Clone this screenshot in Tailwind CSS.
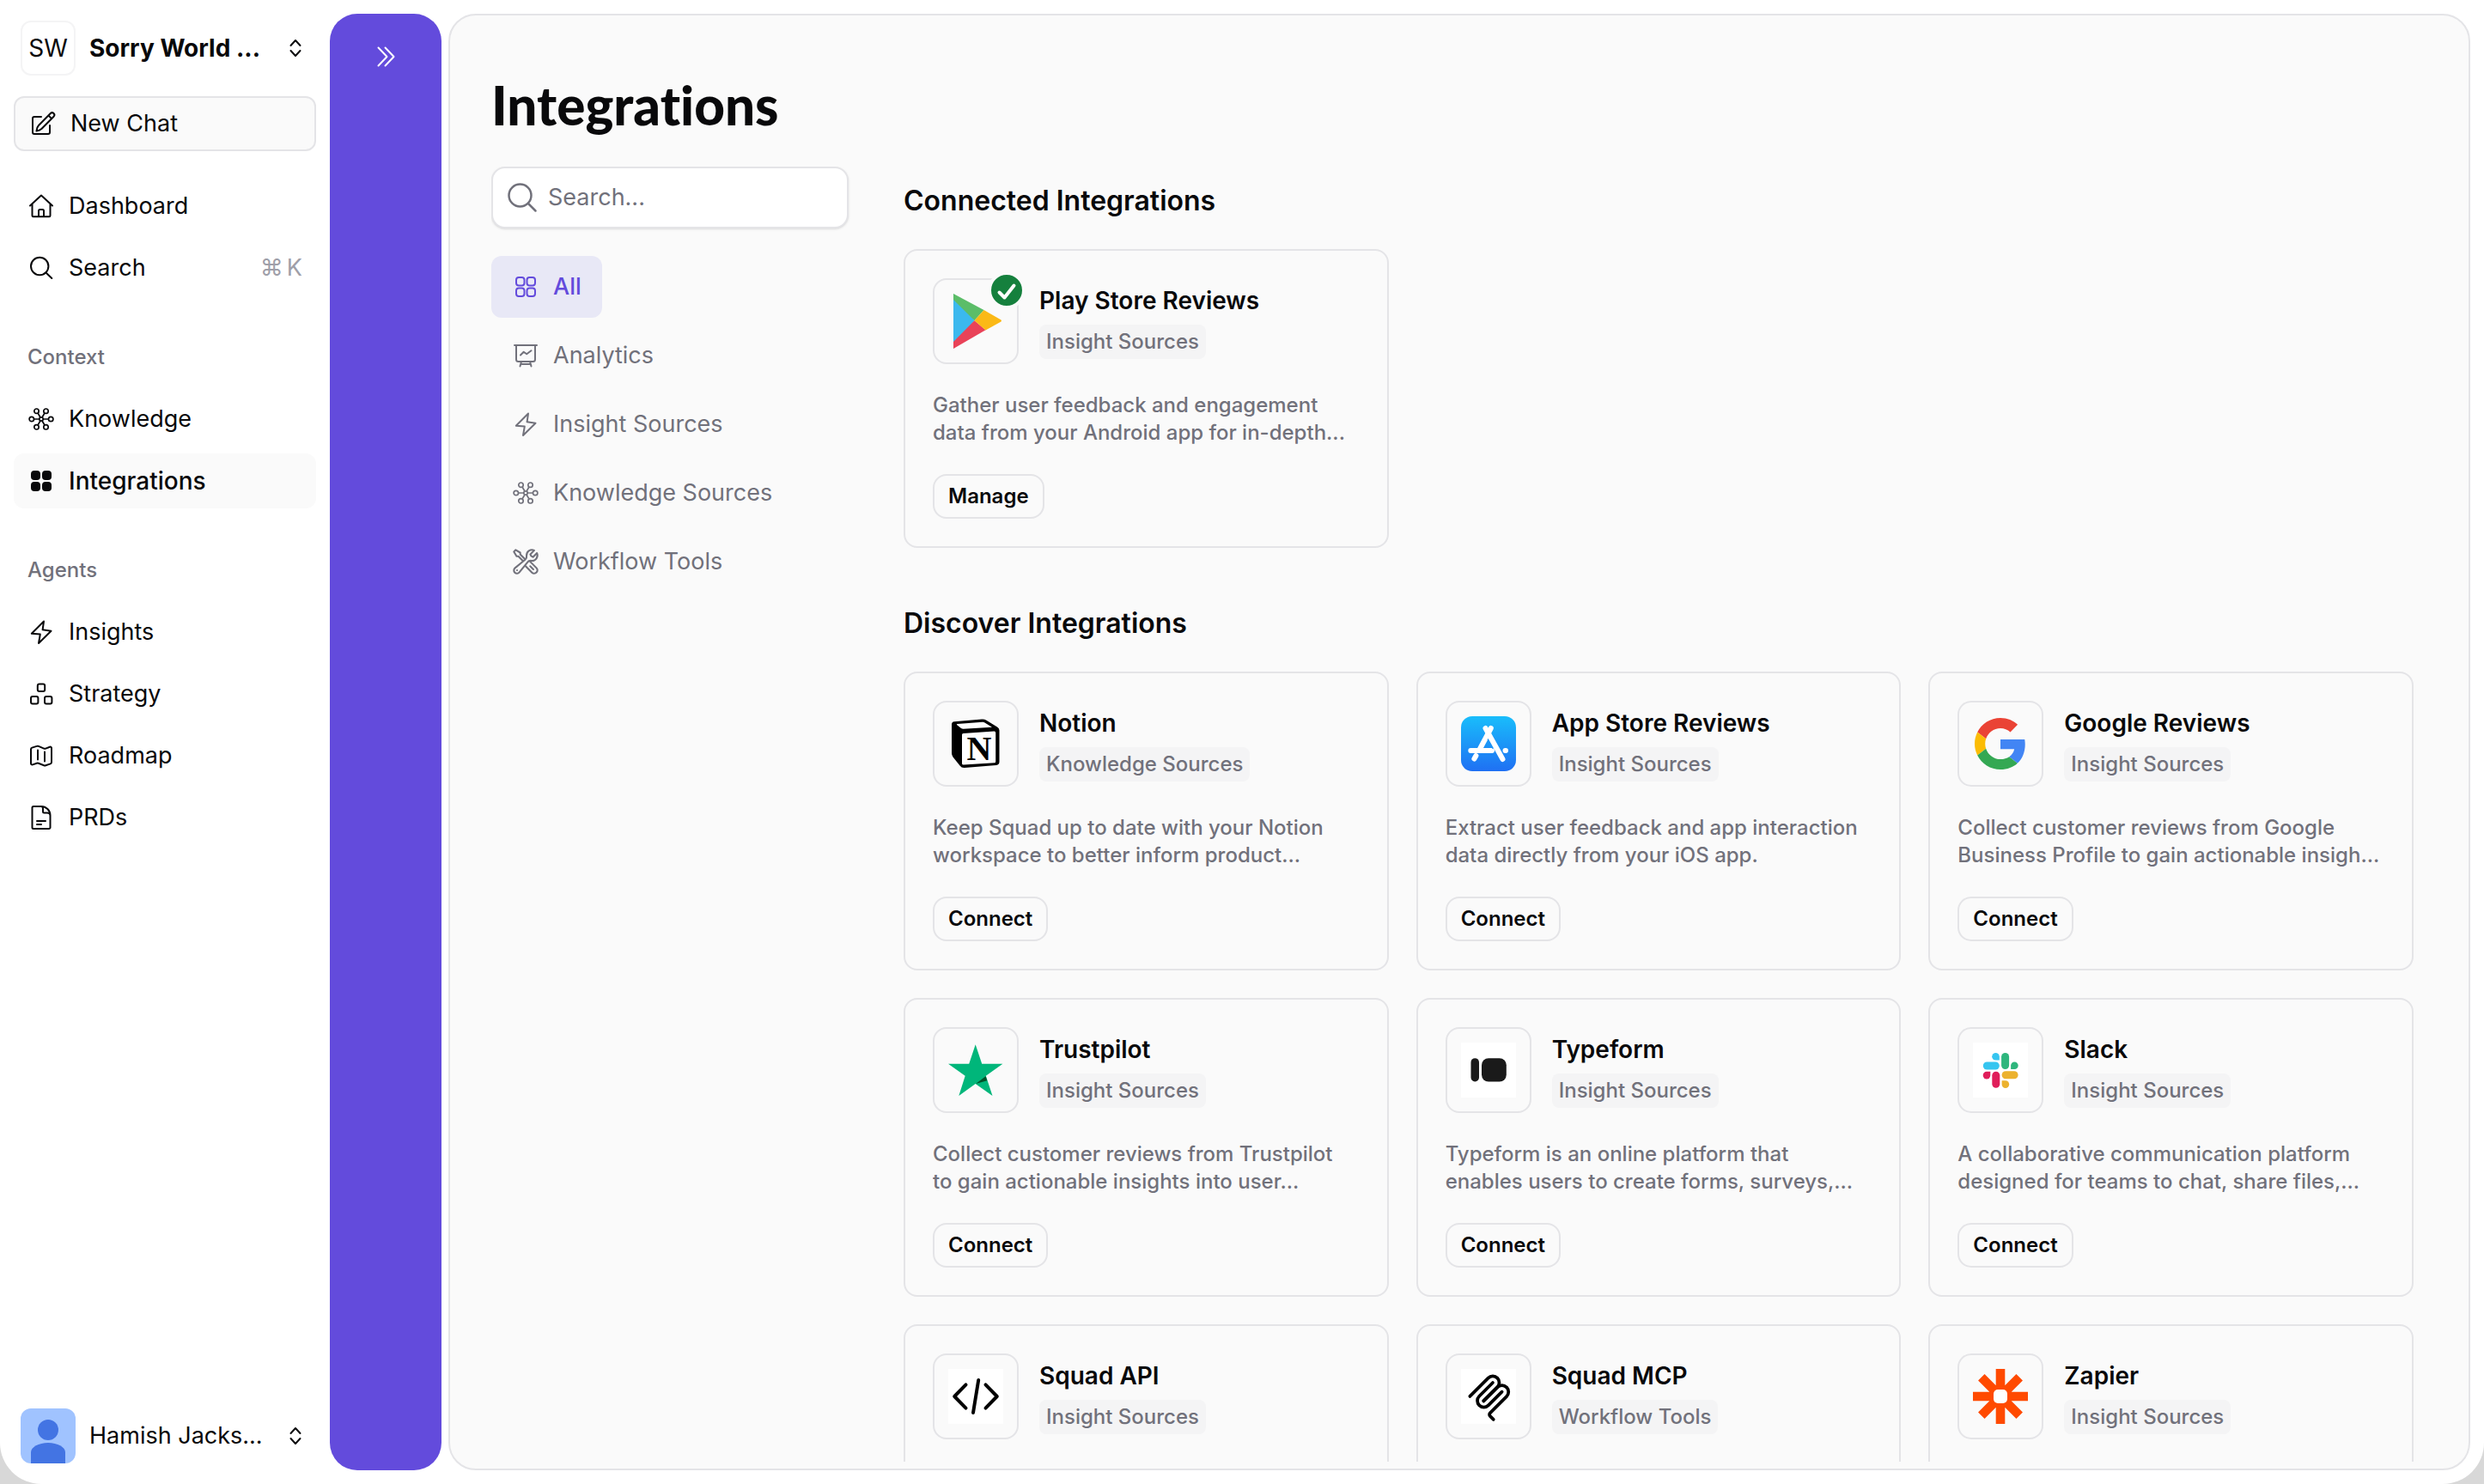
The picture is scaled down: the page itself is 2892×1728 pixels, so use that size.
<!DOCTYPE html>
<html lang="en">
<head>
  <meta charset="UTF-8" />
  <meta name="viewport" content="width=device-width, initial-scale=1.0" />
  <title>Integrations</title>
  <script src="https://cdn.jsdelivr.net/npm/@tailwindcss/browser@4"></script>
</head>
<body class="bg-[#d8d8d8] font-['Inter',sans-serif] text-[27px] text-zinc-950">
  <!-- Icons used more than once -->
  <svg class="hidden">
    <symbol id="icon-updown" viewBox="0 0 32 32" fill="none" stroke="currentColor" stroke-width="2" stroke-linecap="round" stroke-linejoin="round">
      <path d="M10.5 13 16 7l5.5 6M10.5 19l5.5 6 5.5-6" />
    </symbol>
    <symbol id="icon-bolt" viewBox="0 0 32 32" fill="none" stroke="currentColor" stroke-width="2" stroke-linejoin="round">
      <path d="M19 3.500 4.800 17.800l10 .8L13 29l14.500-14.300-9.900-1.400z" />
    </symbol>
    <symbol id="icon-nodes" viewBox="0 0 32 32" fill="none" stroke="currentColor" stroke-width="1.700">
      <circle cx="16" cy="16" r="2.200" />
      <circle cx="4.800" cy="16" r="2.700" />
      <circle cx="27.200" cy="16" r="2.700" />
      <circle cx="10.500" cy="6.700" r="2.700" />
      <circle cx="21.500" cy="6.700" r="2.700" />
      <circle cx="10.500" cy="25.300" r="2.700" />
      <circle cx="21.500" cy="25.300" r="2.700" />
      <path d="M7.400 16h6.400M18.200 16h6.400M12 9l3 5M20 9l-3 5M12 23l3-5M20 23l-3-5" />
    </symbol>
  </svg>

  <div class="flex h-screen overflow-hidden rounded-b-[48px] bg-white">
    <!-- Sidebar -->
    <aside class="flex w-96 shrink-0 flex-col p-4">
      <button class="flex items-center gap-4 p-2 text-left text-[28px]">
        <span class="flex size-16 shrink-0 items-center justify-center rounded-xl border-2 border-zinc-100">SW</span>
        <span class="flex-1 whitespace-nowrap font-bold">Sorry World ...</span>
        <svg class="size-8 shrink-0"><use href="#icon-updown" /></svg>
      </button>

      <button class="mt-4 flex h-16 items-center gap-4 rounded-xl border-2 border-zinc-200 bg-zinc-50 px-4">
        <svg class="size-8" viewBox="0 0 32 32" fill="none" stroke="currentColor" stroke-width="2" stroke-linecap="round" stroke-linejoin="round">
          <path d="M14 8H6a2 2 0 0 0-2 2v16a2 2 0 0 0 2 2h16a2 2 0 0 0 2-2v-8" />
          <path d="M8.500 24.500c.3-3 1-5 2.500-6.500L24.800 4a2.600 2.600 0 0 1 3.700 3.700L14.700 21.700c-1.700 1.600-3.500 2.400-6.200 2.800zM22.500 6.500l3.600 3.600" />
        </svg>
        New Chat
      </button>

      <nav class="mt-8 flex flex-col gap-2">
        <a href="#" class="flex h-16 items-center gap-4 rounded-xl px-4">
          <svg class="size-8" viewBox="0 0 32 32" fill="none" stroke="currentColor" stroke-width="2" stroke-linecap="round" stroke-linejoin="round">
            <path d="M3 15.500 16 3.500l13 12M5.500 13.500V27a1.200 1.200 0 0 0 1.200 1.200h18.600a1.200 1.200 0 0 0 1.200-1.200V13.500M13 28v-6.500a1.500 1.500 0 0 1 1.500-1.500h3a1.500 1.500 0 0 1 1.500 1.500V28" />
          </svg>
          Dashboard
        </a>
        <a href="#" class="flex h-16 items-center gap-4 rounded-xl px-4">
          <svg class="size-8" viewBox="0 0 32 32" fill="none" stroke="currentColor" stroke-width="2" stroke-linecap="round">
            <circle cx="14.200" cy="14" r="10.200" />
            <path d="m21.500 21.500 6.800 6.500" />
          </svg>
          Search
          <kbd class="ml-auto flex gap-1 font-['Inter',sans-serif] text-zinc-400"><span>⌘</span><span>K</span></kbd>
        </a>
      </nav>

      <h2 class="mt-12 mb-4 px-4 text-[24px] leading-12 font-medium text-zinc-500">Context</h2>
      <nav class="flex flex-col gap-2">
        <a href="#" class="flex h-16 items-center gap-4 rounded-xl px-4">
          <svg class="size-8"><use href="#icon-nodes" /></svg>
          Knowledge
        </a>
        <a href="#" class="flex h-16 items-center gap-4 rounded-xl bg-zinc-50 px-4 text-[28px] font-medium">
          <svg class="size-8" viewBox="0 0 32 32" fill="currentColor">
            <rect x="4" y="4" width="11" height="11" rx="4" />
            <rect x="17" y="4" width="11" height="11" rx="4" />
            <rect x="4" y="17" width="11" height="11" rx="4" />
            <rect x="17" y="17" width="11" height="11" rx="4" />
          </svg>
          Integrations
        </a>
      </nav>

      <h2 class="mt-12 mb-4 px-4 text-[24px] leading-12 font-medium text-zinc-500">Agents</h2>
      <nav class="flex flex-col gap-2">
        <a href="#" class="flex h-16 items-center gap-4 rounded-xl px-4">
          <svg class="size-8"><use href="#icon-bolt" /></svg>
          Insights
        </a>
        <a href="#" class="flex h-16 items-center gap-4 rounded-xl px-4">
          <svg class="size-8" viewBox="0 0 32 32" fill="none" stroke="currentColor" stroke-width="2">
            <rect x="11.800" y="4.500" width="8.400" height="8.400" rx="2" />
            <rect x="4" y="19" width="8.400" height="8.400" rx="2" />
            <rect x="20" y="19" width="8.400" height="8.400" rx="2" />
          </svg>
          Strategy
        </a>
        <a href="#" class="flex h-16 items-center gap-4 rounded-xl px-4">
          <svg class="size-8" viewBox="0 0 32 32" fill="none" stroke="currentColor" stroke-width="2" stroke-linecap="round" stroke-linejoin="round">
            <path d="M4 8.500a2 2 0 0 1 1.300-1.900l5.500-1.700a3 3 0 0 1 2 0l6.400 2.700a3 3 0 0 0 2 0l4.800-1.900A1.500 1.500 0 0 1 28 7.100v16.400a2 2 0 0 1-1.300 1.900l-5.500 1.900a3 3 0 0 1-2 0l-6.400-2.500a3 3 0 0 0-2 0L6 26.400a1.500 1.500 0 0 1-2-1.400zM12 9.500v11M20 11.500v11" />
          </svg>
          Roadmap
        </a>
        <a href="#" class="flex h-16 items-center gap-4 rounded-xl px-4">
          <svg class="size-8" viewBox="0 0 32 32" fill="none" stroke="currentColor" stroke-width="2" stroke-linecap="round" stroke-linejoin="round">
            <path d="M16 3H7a1.500 1.500 0 0 0-1.500 1.500v23A1.500 1.500 0 0 0 7 29h18a1.500 1.500 0 0 0 1.500-1.500V13.500A10.500 10.500 0 0 0 16 3c1.500 0 2 1 2 3v3a1.500 1.500 0 0 0 1.500 1.500H23c2 0 3.500 1 3.500 3M11 20h10M11 24h5" />
          </svg>
          PRDs
        </a>
      </nav>

      <button class="mt-auto flex items-center gap-4 p-2 text-left">
        <svg class="size-16 shrink-0 rounded-xl bg-[#a0c3ff]" viewBox="0 0 64 64" fill="#4374e3">
          <circle cx="32" cy="25" r="12" />
          <path d="M12 64V51c0-6 9-11 20-11s20 5 20 11v13z" />
        </svg>
        <span class="flex-1 whitespace-nowrap">Hamish Jacks...</span>
        <svg class="size-8 shrink-0"><use href="#icon-updown" /></svg>
      </button>
    </aside>

    <!-- Collapsed chat strip -->
    <div class="my-4 mr-2 flex w-[130px] shrink-0 flex-col items-center rounded-[32px] bg-[#634bdc] pt-8 text-white">
      <button aria-label="Expand chat">
        <svg class="size-9" viewBox="0 0 36 36" fill="none" stroke="currentColor" stroke-width="2" stroke-linecap="round" stroke-linejoin="round">
          <path d="m9.500 7.500 10 10.500-10 10.500M17.500 7.500l10 10.500-10 10.500" />
        </svg>
      </button>
    </div>

    <!-- Content panel -->
    <main class="my-4 mr-4 flex min-w-0 flex-1 flex-col overflow-hidden rounded-[32px] border-2 border-zinc-200 bg-zinc-50 pt-16 pr-16 pb-2 pl-12">
      <h1 class="mb-8 font-['Lato',sans-serif] text-[62px] leading-[80px] font-black [font-variant-ligatures:none]">Integrations</h1>

      <div class="flex min-h-0 flex-1 gap-16 overflow-hidden">
        <div class="w-104 shrink-0">
          <label class="flex h-18 items-center gap-3 rounded-2xl border-2 border-zinc-200 bg-white px-4 text-zinc-500 shadow-sm">
            <svg class="size-9 shrink-0" viewBox="0 0 36 36" fill="none" stroke="currentColor" stroke-width="2.500" stroke-linecap="round">
              <circle cx="15.500" cy="15.500" r="13" />
              <path d="m25 25 8.500 8.500" />
            </svg>
            <input type="text" aria-label="Search integrations" placeholder="Search..." class="w-full min-w-0 bg-transparent placeholder:text-zinc-500 outline-none" />
          </label>

          <nav class="mt-8 flex flex-col items-start gap-2 text-zinc-500">
            <button class="flex h-18 items-center gap-4 rounded-xl bg-[#e8e8f6] px-6 font-medium text-[#634bdc]">
              <svg class="size-8" viewBox="0 0 32 32" fill="none" stroke="currentColor" stroke-width="2">
                <rect x="5" y="5" width="9.500" height="9.500" rx="3" />
                <rect x="17.500" y="5" width="9.500" height="9.500" rx="3" />
                <rect x="5" y="17.500" width="9.500" height="9.500" rx="3" />
                <rect x="17.500" y="17.500" width="9.500" height="9.500" rx="3" />
              </svg>
              All
            </button>
            <button class="flex h-18 items-center gap-4 rounded-xl px-6">
              <svg class="size-8" viewBox="0 0 32 32" fill="none" stroke="currentColor" stroke-width="2" stroke-linecap="round" stroke-linejoin="round">
                <path d="M3 4h26M5 4v16.500A2.500 2.500 0 0 0 7.500 23h17a2.500 2.500 0 0 0 2.500-2.500V4M11 23l-1.500 5.500M21 23l1.500 5.500M10.500 26h11M10 15.500l3.700-3.700 3.500 2.500 5.300-4" />
              </svg>
              Analytics
            </button>
            <button class="flex h-18 items-center gap-4 rounded-xl px-6">
              <svg class="size-8"><use href="#icon-bolt" /></svg>
              Insight Sources
            </button>
            <button class="flex h-18 items-center gap-4 rounded-xl px-6">
              <svg class="size-8"><use href="#icon-nodes" /></svg>
              Knowledge Sources
            </button>
            <button class="flex h-18 items-center gap-4 rounded-xl px-6">
              <svg class="size-8" viewBox="0.600 0.600 22.800 22.800" fill="none" stroke="currentColor" stroke-width="1.500" stroke-linecap="round" stroke-linejoin="round">
                <path d="M11.420 15.170 17.250 21A2.652 2.652 0 0 0 21 17.250l-5.877-5.877M11.420 15.170l2.496-3.030c.317-.384.74-.626 1.208-.766M11.420 15.170l-4.655 5.653a2.548 2.548 0 1 1-3.586-3.586l6.837-5.630m5.108-.233c.55-.164 1.163-.188 1.743-.14a4.500 4.500 0 0 0 4.486-6.336l-3.276 3.277a3.004 3.004 0 0 1-2.250-2.250l3.276-3.276a4.500 4.500 0 0 0-6.336 4.486c.091 1.076-.071 2.264-.904 2.950l-.102.085m-1.745 1.437L5.909 7.500H4.500L2.250 3.750l1.500-1.500L7.500 4.500v1.409l4.260 4.260m-1.745 1.437 1.745-1.437m6.615 8.206L15.750 15.750M4.867 19.125h.008v.008h-.008v-.008Z" />
              </svg>
              Workflow Tools
            </button>
          </nav>
        </div>

        <div class="flex min-w-0 flex-1 flex-col gap-16 pt-4">
          <section>
            <h2 class="mb-8 text-[32px] leading-12 font-semibold">Connected Integrations</h2>
            <div class="grid grid-cols-3 gap-8">
              <article class="rounded-2xl border-2 border-zinc-200 p-8">
                <div class="flex gap-6">
                  <div class="relative flex size-25 shrink-0 items-center justify-center rounded-2xl border-2 border-zinc-200">
                    <svg class="size-16" viewBox="0 0 64 64">
                      <path fill="#3bb9ee" d="M6 0v64l24.500-32.700z" />
                      <path fill="#5bbd68" d="M6 0v7l24.500 24.300L41.500 19z" />
                      <path fill="#e94258" d="M6 64v-8l24.500-24.700 13 11z" />
                      <path fill="#fbb916" d="M41.500 19 61.500 30.500q1 1 0 2L43.500 42.500l-13-11.200z" />
                    </svg>
                    <span class="absolute -top-2.5 -right-2.5 rounded-full border-4 border-zinc-50 bg-[#15803d]">
                      <svg class="size-9" viewBox="0 0 36 36" fill="none" stroke="#fff" stroke-width="4" stroke-linecap="round" stroke-linejoin="round">
                        <path d="m9.500 20.500 6 6L26.500 12.500" />
                      </svg>
                    </span>
                  </div>
                  <div class="flex flex-col items-start gap-2">
                    <h3 class="pt-1.5 text-[28px] leading-10 font-semibold">Play Store Reviews</h3>
                    <span class="rounded-lg bg-zinc-100 px-2 text-[24px] leading-10 font-medium text-zinc-500">Insight Sources</span>
                  </div>
                </div>
                <p class="mt-8 line-clamp-2 text-[24px] leading-8 font-medium text-zinc-500">Gather user feedback and engagement data from your Android app for in-depth...</p>
                <button class="mt-8 h-13 rounded-2xl border-2 border-zinc-200 px-4 text-[24px] font-semibold">Manage</button>
              </article>
            </div>
          </section>

          <section>
            <h2 class="mb-8 text-[32px] leading-12 font-semibold">Discover Integrations</h2>
            <div class="grid grid-cols-3 gap-8">
              <article class="rounded-2xl border-2 border-zinc-200 p-8">
                <div class="flex gap-6">
                  <div class="flex size-25 shrink-0 items-center justify-center rounded-2xl border-2 border-zinc-200">
                    <svg class="size-16" viewBox="0 0 64 64">
                      <path d="M4 9.500q0-3 3-3.300L39 3.600q3-.3 5 1l13 8q2.500 1.500 2.500 4V53q0 3.500-3.500 3.900L19 60q-3.500.3-5.500-2.500L5.500 47.500Q4 45.500 4 43z" />
                      <path fill="#fff" d="M10.500 8.900 40 6.800q1.500 0 2.500.6l8.500 5.300-33.500 2q-1.500 0-2.500-.8l-5-4q-.5-.9.500-1zM16 21.500q0-1.500 1.500-1.600l36-2.300q1.700 0 1.700 1.600v33.500q0 1.500-1.500 1.600l-36 2.300q-1.700 0-1.700-1.600z" />
                      <text x="36" y="51" text-anchor="middle" class="font-['Liberation_Serif',serif] text-[40px] font-bold">N</text>
                    </svg>
                  </div>
                  <div class="flex flex-col items-start gap-2">
                    <h3 class="pt-1.5 text-[28px] leading-10 font-semibold">Notion</h3>
                    <span class="rounded-lg bg-zinc-100 px-2 text-[24px] leading-10 font-medium text-zinc-500">Knowledge Sources</span>
                  </div>
                </div>
                <p class="mt-8 line-clamp-2 text-[24px] leading-8 font-medium text-zinc-500">Keep Squad up to date with your Notion workspace to better inform product...</p>
                <button class="mt-8 h-13 rounded-2xl border-2 border-zinc-200 px-4 text-[24px] font-semibold">Connect</button>
              </article>

              <article class="rounded-2xl border-2 border-zinc-200 p-8">
                <div class="flex gap-6">
                  <div class="flex size-25 shrink-0 items-center justify-center rounded-2xl border-2 border-zinc-200">
                    <svg class="size-16" viewBox="0 0 64 64">
                      <defs>
                        <linearGradient id="appstore" x1="0" y1="0" x2="0" y2="1">
                          <stop offset="0" stop-color="#19bdfb" />
                          <stop offset="1" stop-color="#1f70f3" />
                        </linearGradient>
                      </defs>
                      <rect width="64" height="64" rx="13" fill="url(#appstore)" />
                      <g fill="none" stroke="#fff" stroke-width="6" stroke-linecap="round">
                        <path d="M34.800 14 22 38M11.300 40H36M51.500 40h.5M17.400 46l-2 3.500" />
                        <path stroke="#1b93f7" stroke-width="8" d="m34 25 6 11" stroke-linecap="butt" />
                        <path d="m28.500 14 20 36" />
                      </g>
                    </svg>
                  </div>
                  <div class="flex flex-col items-start gap-2">
                    <h3 class="pt-1.5 text-[28px] leading-10 font-semibold">App Store Reviews</h3>
                    <span class="rounded-lg bg-zinc-100 px-2 text-[24px] leading-10 font-medium text-zinc-500">Insight Sources</span>
                  </div>
                </div>
                <p class="mt-8 line-clamp-2 text-[24px] leading-8 font-medium text-zinc-500">Extract user feedback and app interaction data directly from your iOS app.</p>
                <button class="mt-8 h-13 rounded-2xl border-2 border-zinc-200 px-4 text-[24px] font-semibold">Connect</button>
              </article>

              <article class="rounded-2xl border-2 border-zinc-200 p-8">
                <div class="flex gap-6">
                  <div class="flex size-25 shrink-0 items-center justify-center rounded-2xl border-2 border-zinc-200">
                    <svg class="size-16" viewBox="-1.600 -1.600 51.200 51.200">
                      <path fill="#EA4335" d="M24 9.500c3.540 0 6.710 1.220 9.210 3.600l6.850-6.850C35.900 2.380 30.470 0 24 0 14.620 0 6.510 5.380 2.560 13.220l7.980 6.190C12.430 13.720 17.740 9.500 24 9.500z" />
                      <path fill="#4285F4" d="M46.980 24.550c0-1.570-.15-3.090-.38-4.550H24v9.020h12.940c-.58 2.960-2.260 5.480-4.780 7.180l7.730 6c4.510-4.180 7.090-10.360 7.090-17.650z" />
                      <path fill="#FBBC05" d="M10.530 28.590c-.48-1.450-.76-2.990-.76-4.590s.27-3.140.76-4.590l-7.980-6.190C.92 16.460 0 20.120 0 24c0 3.880.92 7.540 2.560 10.780l7.970-6.190z" />
                      <path fill="#34A853" d="M24 48c6.480 0 11.930-2.130 15.890-5.810l-7.730-6c-2.150 1.450-4.920 2.300-8.160 2.300-6.260 0-11.570-4.220-13.470-9.910l-7.980 6.190C6.510 42.620 14.620 48 24 48z" />
                    </svg>
                  </div>
                  <div class="flex flex-col items-start gap-2">
                    <h3 class="pt-1.5 text-[28px] leading-10 font-semibold">Google Reviews</h3>
                    <span class="rounded-lg bg-zinc-100 px-2 text-[24px] leading-10 font-medium text-zinc-500">Insight Sources</span>
                  </div>
                </div>
                <p class="mt-8 line-clamp-2 text-[24px] leading-8 font-medium text-zinc-500">Collect customer reviews from Google Business Profile to gain actionable insigh...</p>
                <button class="mt-8 h-13 rounded-2xl border-2 border-zinc-200 px-4 text-[24px] font-semibold">Connect</button>
              </article>

              <article class="rounded-2xl border-2 border-zinc-200 p-8">
                <div class="flex gap-6">
                  <div class="flex size-25 shrink-0 items-center justify-center rounded-2xl border-2 border-zinc-200">
                    <svg class="size-16" viewBox="0 0 64 64">
                      <path fill="#00b67a" d="M31.700 2.300 39.200 24.800h24.200L43.800 38.800 51.500 62 31.700 48 12.300 62l7.400-23.200L0 24.800h24.200z" />
                      <path fill="#005128" d="m32 48 13.300-3.800-1.700-5z" />
                    </svg>
                  </div>
                  <div class="flex flex-col items-start gap-2">
                    <h3 class="pt-1.5 text-[28px] leading-10 font-semibold">Trustpilot</h3>
                    <span class="rounded-lg bg-zinc-100 px-2 text-[24px] leading-10 font-medium text-zinc-500">Insight Sources</span>
                  </div>
                </div>
                <p class="mt-8 line-clamp-2 text-[24px] leading-8 font-medium text-zinc-500">Collect customer reviews from Trustpilot<br />to gain actionable insights into user...</p>
                <button class="mt-8 h-13 rounded-2xl border-2 border-zinc-200 px-4 text-[24px] font-semibold">Connect</button>
              </article>

              <article class="rounded-2xl border-2 border-zinc-200 p-8">
                <div class="flex gap-6">
                  <div class="flex size-25 shrink-0 items-center justify-center rounded-2xl border-2 border-zinc-200">
                    <svg class="size-16 bg-white" viewBox="0 0 64 64" fill="#1a1a1a">
                      <rect x="11.500" y="18.200" width="9.500" height="27.300" rx="4.700" />
                      <rect x="24" y="18.200" width="28.800" height="27.300" rx="8" />
                    </svg>
                  </div>
                  <div class="flex flex-col items-start gap-2">
                    <h3 class="pt-1.5 text-[28px] leading-10 font-semibold">Typeform</h3>
                    <span class="rounded-lg bg-zinc-100 px-2 text-[24px] leading-10 font-medium text-zinc-500">Insight Sources</span>
                  </div>
                </div>
                <p class="mt-8 line-clamp-2 text-[24px] leading-8 font-medium text-zinc-500">Typeform is an online platform that<br />enables users to create forms, surveys,...</p>
                <button class="mt-8 h-13 rounded-2xl border-2 border-zinc-200 px-4 text-[24px] font-semibold">Connect</button>
              </article>

              <article class="rounded-2xl border-2 border-zinc-200 p-8">
                <div class="flex gap-6">
                  <div class="flex size-25 shrink-0 items-center justify-center rounded-2xl border-2 border-zinc-200">
                    <svg class="size-16 bg-white" viewBox="0 0 64 64">
                      <defs>
                        <g id="slack-arm">
                          <rect x="11.800" y="22.500" width="19" height="9" rx="4.500" />
                          <path d="M30.800 20.500h-4.300a4.300 4.300 0 1 1 4.300-4.300z" />
                        </g>
                      </defs>
                      <use href="#slack-arm" fill="#36c5f0" />
                      <use href="#slack-arm" fill="#2eb67d" transform="rotate(90 32.200 32.400)" />
                      <use href="#slack-arm" fill="#ecb22e" transform="rotate(180 32.200 32.400)" />
                      <use href="#slack-arm" fill="#e01e5a" transform="rotate(270 32.200 32.400)" />
                    </svg>
                  </div>
                  <div class="flex flex-col items-start gap-2">
                    <h3 class="pt-1.5 text-[28px] leading-10 font-semibold">Slack</h3>
                    <span class="rounded-lg bg-zinc-100 px-2 text-[24px] leading-10 font-medium text-zinc-500">Insight Sources</span>
                  </div>
                </div>
                <p class="mt-8 line-clamp-2 text-[24px] leading-8 font-medium text-zinc-500">A collaborative communication platform designed for teams to chat, share files,...</p>
                <button class="mt-8 h-13 rounded-2xl border-2 border-zinc-200 px-4 text-[24px] font-semibold">Connect</button>
              </article>

              <article class="rounded-2xl border-2 border-zinc-200 p-8">
                <div class="flex gap-6">
                  <div class="flex size-25 shrink-0 items-center justify-center rounded-2xl border-2 border-zinc-200">
                    <svg class="size-16 bg-white" viewBox="0 0 64 64" fill="none" stroke="#000" stroke-width="4" stroke-linecap="round" stroke-linejoin="round">
                      <path d="M20.500 18.400 7.200 32l13.300 13.600M43.500 18.400 56.800 32 43.500 45.600M35.200 13 29 51" />
                    </svg>
                  </div>
                  <div class="flex flex-col items-start gap-2">
                    <h3 class="pt-1.5 text-[28px] leading-10 font-semibold">Squad API</h3>
                    <span class="rounded-lg bg-zinc-100 px-2 text-[24px] leading-10 font-medium text-zinc-500">Insight Sources</span>
                  </div>
                </div>
              </article>

              <article class="h-87 rounded-2xl border-2 border-zinc-200 p-8">
                <div class="flex gap-6">
                  <div class="flex size-25 shrink-0 items-center justify-center rounded-2xl border-2 border-zinc-200">
                    <svg class="size-16 bg-white" viewBox="-8 -4 204 204" fill="none" stroke="#000" stroke-width="12" stroke-linecap="round">
                      <path d="M25 97.853 92.882 29.971c9.373-9.373 24.569-9.373 33.941 0 9.373 9.372 9.373 24.568 0 33.941L75.558 115.177" />
                      <path d="M76.265 114.470 126.823 63.912c9.373-9.373 24.569-9.373 33.942 0l.353.353c9.373 9.373 9.373 24.569 0 33.941L99.725 159.600c-3.124 3.124-3.124 8.189 0 11.313l12.606 12.607" />
                      <path d="M109.853 46.941 59.648 97.146c-9.372 9.372-9.372 24.568 0 33.941 9.373 9.372 24.569 9.372 33.941 0l50.205-50.205" />
                    </svg>
                  </div>
                  <div class="flex flex-col items-start gap-2">
                    <h3 class="pt-1.5 text-[28px] leading-10 font-semibold">Squad MCP</h3>
                    <span class="rounded-lg bg-zinc-100 px-2 text-[24px] leading-10 font-medium text-zinc-500">Workflow Tools</span>
                  </div>
                </div>
              </article>

              <article class="rounded-2xl border-2 border-zinc-200 p-8">
                <div class="flex gap-6">
                  <div class="flex size-25 shrink-0 items-center justify-center rounded-2xl border-2 border-zinc-200">
                    <svg class="size-16" viewBox="0 0 64 64">
                      <g stroke="#ff4a00" stroke-width="10.600">
                        <path d="M32 0v64M0 32h64M9.800 9.800l44.400 44.400M54.200 9.800 9.800 54.200" />
                      </g>
                      <rect x="24" y="24" width="16" height="16" rx="5" fill="#fff" />
                    </svg>
                  </div>
                  <div class="flex flex-col items-start gap-2">
                    <h3 class="pt-1.5 text-[28px] leading-10 font-semibold">Zapier</h3>
                    <span class="rounded-lg bg-zinc-100 px-2 text-[24px] leading-10 font-medium text-zinc-500">Insight Sources</span>
                  </div>
                </div>
              </article>
            </div>
          </section>
        </div>
      </div>
    </main>
  </div>
</body>
</html>
